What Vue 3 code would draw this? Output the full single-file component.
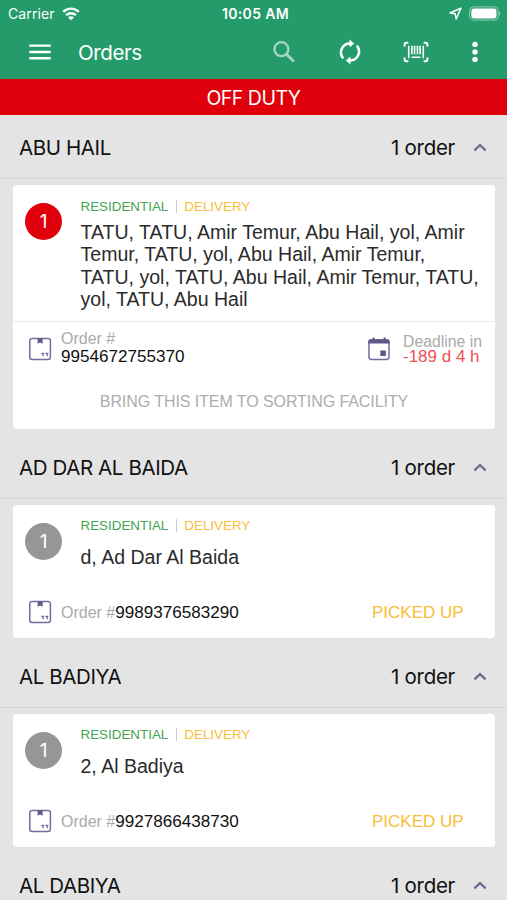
<script setup>
const groups = [
  {
    name: 'ABU HAIL',
    order: {
      position: 1,
      late: true,
      address: [
        'TATU, TATU, Amir Temur, Abu Hail, yol, Amir',
        'Temur, TATU, yol, Abu Hail, Amir Temur,',
        'TATU, yol, TATU, Abu Hail, Amir Temur, TATU,',
        'yol, TATU, Abu Hail',
      ],
      number: '9954672755370',
      deadline: '-189 d 4 h',
      note: 'BRING THIS ITEM TO SORTING FACILITY',
    },
  },
  {
    name: 'AD DAR AL BAIDA',
    order: { position: 1, address: ['d, Ad Dar Al Baida'], number: '9989376583290', status: 'PICKED UP' },
  },
  {
    name: 'AL BADIYA',
    order: { position: 1, address: ['2, Al Badiya'], number: '9927866438730', status: 'PICKED UP' },
  },
  { name: 'AL DABIYA' },
]
</script>

<template>
  <div class="screen">
    <header class="top">
      <div class="status-bar">
        <div class="side">
          <span class="carrier">Carrier</span>
          <svg class="wifi" width="18" height="14" viewBox="0 0 18 14" fill="none" stroke="#fff" stroke-width="2.4">
            <path d="M1.2 4.8a11.2 11.2 0 0 1 15.6 0" />
            <path d="M4.1 8.2a7.2 7.2 0 0 1 9.8 0" />
            <path d="M9 13.2 6.1 10.4a4 4 0 0 1 5.8 0z" fill="#fff" stroke="none" />
          </svg>
        </div>
        <span class="time">10:05 AM</span>
        <div class="side right">
          <svg width="13" height="13" viewBox="0 0 12 12" fill="none" stroke="#fff" stroke-width="1.4" stroke-linejoin="round">
            <path d="M11 1 1 5.5l4.8.8.8 4.8z" />
          </svg>
          <svg class="battery" width="32" height="15" viewBox="0 0 32 15">
            <rect x="0.6" y="0.9" width="28.6" height="13.2" rx="4" fill="none" stroke="#fff" stroke-opacity=".5" />
            <rect x="2.3" y="2.6" width="25.2" height="9.8" rx="2.4" fill="#fff" />
            <path d="M30.3 5.3c1.6.7 1.6 3.7 0 4.4z" fill="#fff" fill-opacity=".6" />
          </svg>
        </div>
      </div>

      <div class="nav">
        <svg class="menu" width="22" height="16" viewBox="0 0 22 16" stroke="#fff" stroke-width="2.4" stroke-linecap="round">
          <path d="M1.2 1.6h19.6M1.2 8h19.6M1.2 14.3h19.6" />
        </svg>
        <h1>Orders</h1>
        <svg class="search" width="24" height="24" viewBox="0 0 24 24" fill="none" stroke="#fff" stroke-width="2.3">
          <circle cx="9.4" cy="9.2" r="7" />
          <path d="m14.5 14.3 7.3 7.3" stroke-width="2.8" />
        </svg>
        <svg class="sync" width="24" height="26" viewBox="0 0 24 26" fill="none" stroke="#fff" stroke-width="2.5">
          <path d="M5.2 19.4A9 9 0 0 1 12 4.5M18.8 6.6A9 9 0 0 1 12 21.5" />
          <path d="M11.6.6v7.8l4.5-3.9zM12.4 17.6v7.8l-4.5-3.9z" fill="#fff" stroke="none" />
        </svg>
        <svg class="scan" width="26" height="22" viewBox="0 0 26 22" fill="none" stroke="#fff" stroke-width="2">
          <path d="M5.4 1.8H3.2Q1.6 1.8 1.6 3.4v2.2M20.6 1.8h2.2q1.6 0 1.6 1.6v2.2M5.4 20.2H3.2q-1.6 0-1.6-1.6v-2.2M20.6 20.2h2.2q1.6 0 1.6-1.6v-2.2" />
          <path d="M5.7 4.8v12.4M20.3 4.8v12.4M8.9 4.8v8.4M11.6 4.8v8.4M14.4 4.8v8.4M17.1 4.8v8.4M8.6 16.3h8.8" stroke-width="1.6" />
        </svg>
        <svg class="more" width="6" height="22" viewBox="0 0 6 22" fill="#fff">
          <circle cx="3" cy="3.4" r="2.7" /><circle cx="3" cy="10.9" r="2.7" /><circle cx="3" cy="18.4" r="2.7" />
        </svg>
      </div>
    </header>

    <div class="duty"><span>OFF DUTY</span></div>

    <section v-for="group in groups" :key="group.name" class="group">
      <div class="group-head">
        <h2>{{ group.name }}</h2>
        <span class="count">1 order</span>
        <svg class="chevron" width="14" height="9" viewBox="0 0 14 9" fill="none" stroke="#6d6a9a" stroke-width="2.3">
          <path d="M1.4 7.4 7 2.1l5.6 5.3" />
        </svg>
      </div>

      <article v-if="group.order" class="card" :class="{ tall: group.order.late }">
        <div class="summary">
          <div class="badge" :class="{ late: group.order.late }">{{ group.order.position }}</div>
          <div class="info">
            <div class="tags">
              <span class="place">RESIDENTIAL</span>
              <i class="bar"></i>
              <span class="kind">DELIVERY</span>
            </div>
            <p class="address">
              <span v-for="line in group.order.address" :key="line">{{ line }}</span>
            </p>
          </div>
        </div>

        <div class="details">
          <svg class="box" width="24" height="24" viewBox="0 0 24 24">
            <rect x="1.8" y="1.6" width="20.6" height="20.8" rx="2.2" fill="none" stroke="#706e9b" stroke-width="1.5" />
            <path d="M9.6 1.6h5v5.2l-2.5-1.2-2.5 1.2z" fill="#5c5988" />
            <path d="M13.4 16.5h2.8M15.1 16.5v2.8M17.5 16.5h2.8M19.2 16.5v2.8" fill="none" stroke="#706e9b" stroke-width="1.3" />
          </svg>
          <div class="number">
            <span class="label">Order #</span>
            <span class="value">{{ group.order.number }}</span>
          </div>
          <template v-if="group.order.deadline">
            <svg class="calendar" width="24" height="24" viewBox="0 0 24 24">
              <rect x="2" y="3" width="20" height="19.4" rx="2.4" fill="none" stroke="#706e9b" stroke-width="1.5" />
              <path d="M1.3 6.4V4.6q0-2.3 2.4-2.3h16.6q2.4 0 2.4 2.3v1.8z" fill="#5c5988" />
              <path d="M6.6.6v3M17.6.6v3" stroke="#5c5988" stroke-width="2" />
              <rect x="13.3" y="13.4" width="5.6" height="5.6" rx=".8" fill="#5c5988" />
            </svg>
            <div class="deadline">
              <span class="label">Deadline in</span>
              <span class="left">{{ group.order.deadline }}</span>
            </div>
          </template>
          <span v-else class="picked">{{ group.order.status }}</span>
        </div>

        <div v-if="group.order.note" class="note">{{ group.order.note }}</div>
      </article>
    </section>
  </div>
</template>

<style>
body {
  background: #e4e4e4;
  overflow: hidden;
}
</style>

<style scoped>
.screen {
  width: 507px;
  height: 900px;
  overflow: hidden;
  background: #e4e4e4;
  font-family: 'Liberation Sans', Arial, sans-serif;
}
h1, h2, p { margin: 0; font-weight: 400; }
span, h1, h2 { white-space: nowrap; }
svg { display: block; flex: none; }

.top { height: 79px; background: #249b6a; color: #fff; font-family: Inter, sans-serif; }
.status-bar { display: flex; align-items: center; height: 27px; padding: 0 6px 0 8px; }
.side { display: flex; align-items: center; flex: 1; }
.right { justify-content: flex-end; gap: 7px; }
.carrier { font-size: 14px; letter-spacing: 0.1px; }
.wifi { margin-left: 7px; }
.time { padding-left: 2px; font-size: 14px; font-weight: 600; letter-spacing: 0.35px; }
.nav { display: flex; align-items: center; height: 50px; padding-left: 29px; }
h1 { width: 166px; margin-left: 27px; font-size: 20.5px; letter-spacing: -0.4px; }
.search { margin-left: 28px; opacity: 0.6; }
.sync { margin-left: 42px; }
.scan { margin-left: 41px; }
.more { margin-left: 43px; }

.duty {
  display: flex;
  align-items: center;
  justify-content: center;
  height: 35px;
  padding-top: 1px;
  margin-bottom: 2px;
  background: #df000b;
  color: #fff;
  font-family: Inter, sans-serif;
  font-size: 19.5px;
  letter-spacing: -0.5px;
}

.group { padding-bottom: 8px; }
.group-head {
  display: flex;
  align-items: center;
  box-sizing: border-box;
  height: 62px;
  padding: 0 20px 1px 19px;
  border-bottom: 1px solid #d6d6d6;
  color: #111;
  font-family: Inter, sans-serif;
  font-size: 20.5px;
}
h2 { flex: 1; font-size: 20.5px; letter-spacing: -0.4px; }
.count { margin-right: 18px; letter-spacing: -0.3px; }

.card {
  box-sizing: border-box;
  height: 133px;
  margin: 6px 12px 0 13px;
  border-radius: 4px;
  background: #fff;
  overflow: hidden;
}
.card.tall { height: 244px; }
.summary { display: flex; height: 93px; }
.tall .summary { height: 136px; border-bottom: 1px solid #ebebeb; }
.badge {
  display: flex;
  align-items: center;
  justify-content: center;
  flex: none;
  width: 37px;
  height: 37px;
  margin: 18px 18.5px 0 12px;
  border-radius: 50%;
  background: #969696;
  color: #fff;
  font-family: Inter, sans-serif;
  font-size: 19px;
}
.badge.late { background: #df000b; }
.tags { display: flex; align-items: center; height: 18px; padding-top: 11px; font-size: 13.4px; }
.tall .tags { padding-top: 12px; }
.place { color: #43a551; }
.bar { width: 1px; height: 13px; margin: 0 7px 0 8px; background: #ccc; }
.kind { color: #f9bd38; }
.address { display: flex; flex-direction: column; padding-top: 12px; color: #2b2b2b; font-size: 19.55px; line-height: 22.4px; }
.tall .address { padding-top: 6px; }

.details { display: flex; height: 40px; padding-left: 15px; }
.box { margin-top: 2px; }
.number { display: flex; width: 300px; margin: 5px 0 0 9px; line-height: 20px; }
.label { color: #aaa; font-size: 16px; }
.value { color: #111; font-size: 17.1px; }
.picked { margin: 5px 0 0 11px; color: #f9bd38; font-size: 17px; line-height: 20px; }

.tall .details { height: 60px; }
.tall .box, .calendar { margin-top: 15px; }
.tall .number { flex-direction: column; width: 306px; margin-top: 8px; line-height: 18px; }
.deadline { display: flex; flex-direction: column; margin: 12px 0 0 12px; line-height: 15px; }
.deadline .label { font-size: 15.8px; }
.left { color: #ee5253; font-size: 17px; }
.note { text-align: center; color: #adadad; font-size: 16px; letter-spacing: -0.07px; line-height: 40px; }
</style>
